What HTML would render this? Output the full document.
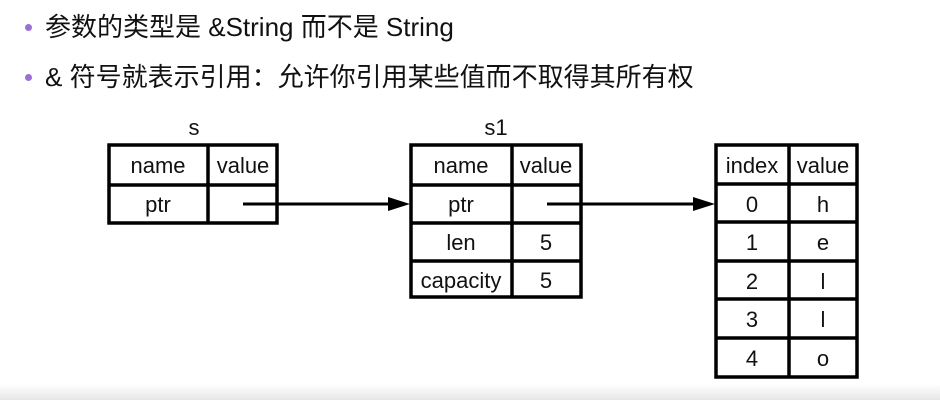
<!DOCTYPE html>
<html><head><meta charset="utf-8"><style>
html,body{margin:0;padding:0;background:#fff;width:940px;height:400px;overflow:hidden;position:relative}
.t{position:absolute;left:45px;font:26px/30px "Liberation Sans","Noto Sans CJK SC",sans-serif;color:#111;white-space:nowrap}
.b{position:absolute;left:25px;width:7px;height:7px;border-radius:50%;background:#9b6fd4}
.bot{position:absolute;left:0;top:384px;width:940px;height:16px;background:linear-gradient(#fff,#e6e6e6)}
</style></head><body>
<div class="b" style="top:24px"></div><div class="t" style="top:12px">参数的类型是 &amp;String 而不是 String</div>
<div class="b" style="top:74px"></div><div class="t" style="top:62px">&amp; 符号就表示引用：允许你引用某些值而不取得其所有权</div>
<svg width="940" height="400" style="position:absolute;left:0;top:0" font-family="Liberation Sans, sans-serif" font-size="22" fill="#111" text-anchor="middle">
<g stroke="#000" stroke-width="3.5" fill="none">
<rect x="109" y="145" width="168" height="78"/>
<line x1="208" y1="145" x2="208" y2="223"/><line x1="109" y1="185" x2="277" y2="185"/>
<rect x="411" y="145" width="170" height="152"/>
<line x1="512" y1="145" x2="512" y2="297"/><line x1="411" y1="185" x2="581" y2="185"/><line x1="411" y1="223" x2="581" y2="223"/><line x1="411" y1="261" x2="581" y2="261"/>
<rect x="716" y="145" width="141" height="232"/>
<line x1="789" y1="145" x2="789" y2="377"/>
<line x1="716" y1="184" x2="857" y2="184"/><line x1="716" y1="222" x2="857" y2="222"/><line x1="716" y1="261" x2="857" y2="261"/><line x1="716" y1="299" x2="857" y2="299"/><line x1="716" y1="338" x2="857" y2="338"/>
<line x1="243" y1="204" x2="390" y2="204" stroke-width="3"/>
<line x1="547" y1="204" x2="695" y2="204" stroke-width="3"/>
</g>
<polygon points="388,197 410,204 388,211" fill="#000"/>
<polygon points="693,197 715,204 693,211" fill="#000"/>
<text x="194" y="135">s</text><text x="496" y="135">s1</text>
<text x="158" y="173">name</text><text x="243" y="173">value</text><text x="158" y="212">ptr</text>
<text x="461" y="173">name</text><text x="546" y="173">value</text><text x="461" y="212">ptr</text>
<text x="461" y="250">len</text><text x="546" y="250">5</text>
<text x="461" y="288">capacity</text><text x="546" y="288">5</text>
<text x="752" y="173">index</text><text x="823" y="173">value</text>
<text x="752" y="212">0</text><text x="823" y="212">h</text>
<text x="752" y="250">1</text><text x="823" y="250">e</text>
<text x="752" y="289">2</text><text x="823" y="289">l</text>
<text x="752" y="327">3</text><text x="823" y="327">l</text>
<text x="752" y="366">4</text><text x="823" y="366">o</text>
</svg>
<div class="bot"></div>
</body></html>
